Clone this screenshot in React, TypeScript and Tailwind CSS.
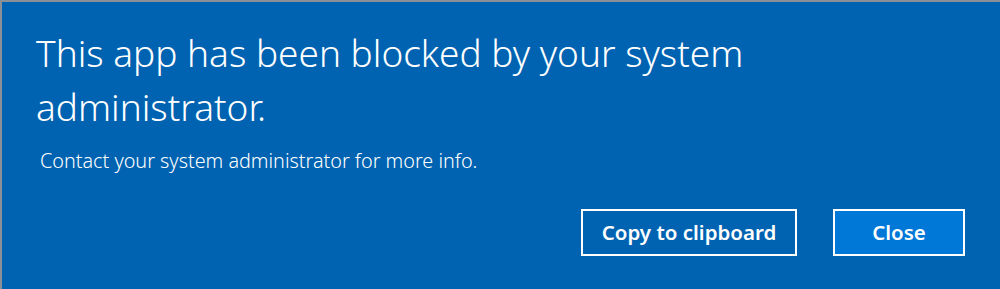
export default function App() {
  return (
    <div
      className="w-[1000px] h-[289px] bg-[#0063b1] border-t-2 border-l-2 border-[#8a9097] flex flex-col text-white"
      style={{ fontFamily: '"Noto Sans", "Open Sans", sans-serif' }}
    >
      <div className="pl-[34px] pt-[24px] pr-[200px]">
        <h1 className="text-[37px] leading-[54px] font-light">
          This app has been blocked by your system administrator.
        </h1>
        <p className="mt-[15px] ml-[4px] text-[19.8px] leading-[24px] font-light">
          Contact your system administrator for more info.
        </p>
      </div>
      <div className="mt-auto flex justify-end gap-[36px] pr-[35px] pb-[33px]">
        <button className="w-[216px] h-[47px] border-2 border-white bg-[#0063b1] text-[20.5px] font-semibold">
          Copy to clipboard
        </button>
        <button className="w-[132px] h-[47px] border-2 border-white bg-[#0078d7] text-[20.5px] font-semibold">
          Close
        </button>
      </div>
    </div>
  );
}
